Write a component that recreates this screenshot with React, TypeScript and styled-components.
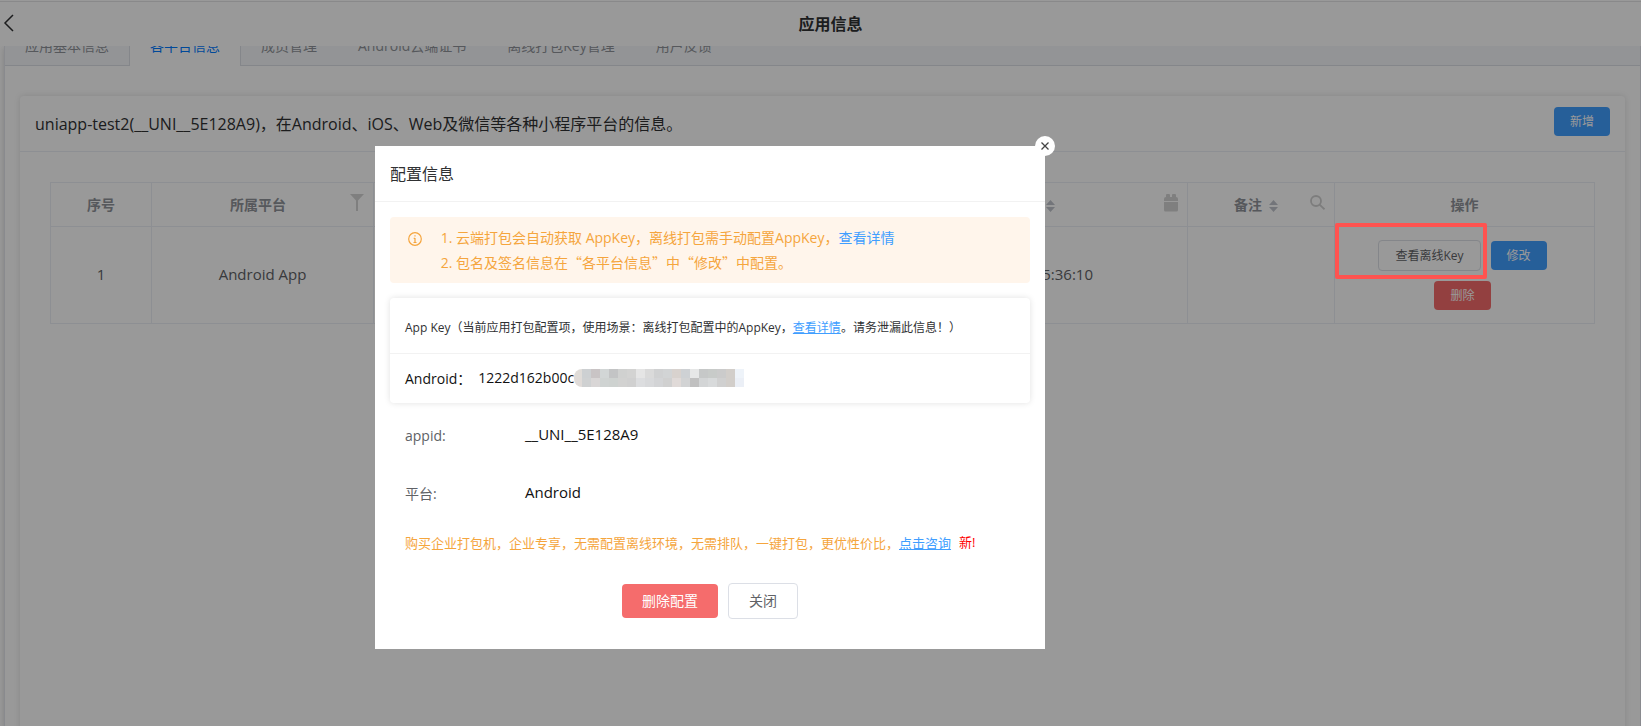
import React from 'react';
import styled, { createGlobalStyle, css } from 'styled-components';

const GlobalStyle = createGlobalStyle`
  * { box-sizing: border-box; }
  body {
    margin: 0;
    background: #fff;
    color: #303133;
    font-family: "Open Sans", "Noto Sans CJK SC", sans-serif;
    font-size: 14px;
    overflow: hidden;
  }
  button { font-family: inherit; cursor: pointer; }
`;

const Page = styled.div`
  height: 100vh;
  display: flex;
  flex-direction: column;
  overflow: hidden;
`;

const TopBar = styled.header`
  flex: none;
  display: flex;
  align-items: center;
  height: 45px;
  margin-top: 1px;
  border-top: 1px solid #e4e4e6;
  background: #fff;
  z-index: 1;
`;

const BackButton = styled.button`
  display: flex;
  width: 20px;
  padding: 0 0 2px 2px;
  border: 0;
  background: none;
  color: #303133;
`;

const PageTitle = styled.h1`
  flex: 1;
  margin: 0;
  text-align: center;
  font-size: 16px;
  line-height: 24px;
  font-weight: 700;
  color: #303133;
`;

const Body = styled.div`
  flex: 1;
  min-height: 0;
  margin-left: 4px;
  border: 1px solid #e4e7ed;
  border-width: 0 1px;
  box-shadow: 0 2px 6px rgba(0, 0, 0, 0.16);
`;

const TabBar = styled.nav`
  display: flex;
  height: 40px;
  margin-top: -20px;
  background: #f5f7fa;
  border-bottom: 1px solid #dcdfe6;
`;

const Tab = styled.button<{ $active?: boolean }>`
  flex: none;
  height: 40px;
  padding: 0 20px;
  border: 0;
  border-right: 1px solid transparent;
  background: none;
  font-size: 14px;
  line-height: 38px;
  color: #909399;
  ${p => p.$active && css`
    border-right-color: #dcdfe6;
    box-shadow: -1px 0 0 #dcdfe6;
    background: #fff;
    color: #007aff;
  `}
`;

const Card = styled.section`
  border-radius: 4px;
  background: #fff;
  box-shadow: 0 0 6px rgba(0, 0, 0, 0.12);
`;

const PlatformCard = styled(Card)`
  margin: 30px 15px 0 15px;
  min-height: 800px;
`;

const CardHead = styled.div`
  display: flex;
  align-items: flex-start;
  justify-content: space-between;
  height: 56px;
  padding: 11px 15px;
  border-bottom: 1px solid #ebeef5;
`;

const CardTitle = styled.h2`
  margin: 0;
  font-size: 16px;
  line-height: 34px;
  font-weight: 400;
`;

type Kind = 'primary' | 'danger' | 'plain';
const Button = styled.button<{ $kind: Kind; $large?: boolean }>`
  padding: ${p => (p.$large ? '0 20px' : '0 16px')};
  height: ${p => (p.$large ? 34 : 29)}px;
  border: 0;
  border-radius: 4px;
  font-size: ${p => (p.$large ? 14 : 12)}px;
  line-height: 20px;
  color: #fff;
  background: ${p => (p.$kind === 'primary' ? '#409eff' : '#f56c6c')};
  ${p => p.$kind === 'plain' && css`
    height: ${p.$large ? 36 : 31}px;
    border: 1px solid #dcdfe6;
    background: #fff;
    color: #606266;
  `}
`;

const Table = styled.table`
  width: calc(100% - 60px);
  margin: 30px;
  table-layout: fixed;
  border-collapse: collapse;
  th, td { border: 1px solid #ebeef5; padding: 0 0 2px; }
`;

const HeadCell = styled.th`
  height: 44px;
  color: #909399;
  font-size: 14px;
`;

const HeadInner = styled.div`
  display: flex;
  align-items: center;
  padding: 0 9px 0 14px;
`;

const HeadLabel = styled.span<{ $end?: boolean }>`
  flex: 1;
  display: flex;
  align-items: center;
  justify-content: ${p => (p.$end ? 'flex-end' : 'center')};
  gap: 7px;
  padding-right: ${p => (p.$end ? 109 : 0)}px;
`;

const SortMark = styled.svg`
  flex: none;
  margin-top: 4px;
`;

const ToolIcon = styled.svg`
  flex: none;
  margin-bottom: 2px;
`;

const Cell = styled.td<{ $end?: boolean }>`
  position: relative;
  height: 97px;
  text-align: ${p => (p.$end ? 'right' : 'center')};
  font-size: 15px;
  color: #606266;
  && { padding-right: ${p => (p.$end ? 94 : 0)}px; }
`;

const Actions = styled.div`
  display: flex;
  flex-wrap: wrap;
  align-items: center;
  justify-content: center;
  gap: 10px;
  padding: 2px 42px 0 38px;
`;

const Highlight = styled.div`
  position: absolute;
  z-index: 20;
  top: -4px;
  left: 0;
  width: 152px;
  height: 56px;
  border: 4px solid #ff5350;
  border-radius: 2px;
  pointer-events: none;
`;

const Overlay = styled.div`
  position: fixed;
  inset: 0;
  z-index: 10;
  display: flex;
  align-items: flex-start;
  justify-content: center;
  padding: 146px 221px 0 0;
  background: rgba(0, 0, 0, 0.4);
`;

const Dialog = styled.div`
  position: relative;
  width: 670px;
  background: #fff;
`;

const CloseButton = styled.button`
  position: absolute;
  top: -10px;
  right: -10px;
  display: flex;
  align-items: center;
  justify-content: center;
  width: 20px;
  height: 20px;
  padding: 0 0 1px;
  border: 0;
  border-radius: 50%;
  background: #fff;
`;

const DialogTitle = styled.h2`
  height: 56px;
  margin: 0;
  padding: 0 15px;
  font-size: 16px;
  line-height: 57px;
  font-weight: 400;
  border-bottom: 1px solid #f2f2f2;
`;

const DialogBody = styled.div`
  padding: 15px 15px 30px;
`;

const Notice = styled.div`
  display: flex;
  padding: 8px 18px;
  border-radius: 4px;
  background: #fff5eb;
  color: #f5a53d;
  svg { margin-top: 7px; }
`;

const NoticeList = styled.ol`
  margin: 0;
  padding-left: 34px;
  line-height: 25px;
`;

const Quoted = styled.span`
  font-family: "Noto Sans CJK SC", sans-serif;
  line-height: 1;
`;

const Link = styled.a<{ $underline?: boolean }>`
  color: #409eff;
  text-decoration: ${p => (p.$underline ? 'underline' : 'none')};
`;

const KeyCard = styled(Card)`
  margin-top: 15px;
`;

const KeyHead = styled.div`
  height: 56px;
  padding: 0 15px;
  font-size: 12px;
  line-height: 60px;
  border-bottom: 1px solid #f2f2f2;
`;

const KeyRow = styled.div`
  display: flex;
  align-items: center;
  height: 49px;
  padding: 0 15px 2px;
  font-size: 14px;
  color: #111;
`;

const KeyLabel = styled.span`
  margin-right: 7px;
`;

const Fields = styled.dl`
  margin: 0;
  padding: 3px 15px 0;
`;

const Field = styled.div`
  display: flex;
  align-items: center;
  height: 58px;
  dt { width: 120px; color: #606266; }
  dd { margin: 0; padding-bottom: 2px; font-size: 15px; color: #111; }
`;

const Promo = styled.p`
  margin: 0;
  padding: 10px 15px;
  font-size: 13px;
  line-height: 22px;
  color: #f5a53d;
`;

const NewMark = styled.span`
  margin-left: 8px;
  font-size: 13px;
  line-height: 1;
  vertical-align: 1px;
  color: #ff0000;
`;

const Footer = styled.div`
  display: flex;
  align-items: center;
  justify-content: center;
  gap: 10px;
  padding-top: 19px;
`;

const SortIcon = () => (
  <SortMark width="9" height="14" viewBox="0 0 9 14" fill="#c0c4cc" aria-hidden="true">
    <path d="M4.5 1 9 6H0zM4.5 13 0 8h9z" />
  </SortMark>
);

const FilterIcon = () => (
  <ToolIcon width="14" height="17" viewBox="0 0 14 17" fill="#d4d4d4" aria-hidden="true">
    <path d="M0 0h14L8 6.500V17H6V6.500z" />
  </ToolIcon>
);

const CalendarIcon = () => (
  <ToolIcon width="14" height="18" viewBox="0 0 14 18" fill="#d4d4d4" aria-hidden="true">
    <path d="M2 1q0-1 1-1h2q1 0 1 1v2h2V1q0-1 1-1h2q1 0 1 1v2q2 0 2 2v2H0V5q0-2 2-2zM0 8h14v8q0 1.500-1.500 1.500h-11Q0 17.500 0 16z" />
  </ToolIcon>
);

const SearchIcon = () => (
  <ToolIcon width="15" height="15" viewBox="0 0 15 15" fill="none" stroke="#d0d0d0" strokeWidth="1.800" aria-hidden="true">
    <circle cx="6" cy="6" r="5" />
    <path d="M9.600 9.600 14.500 14.300" />
  </ToolIcon>
);

const mosaic = [
  '#e0dcd8 #cdd0d2 #c9c4c5 #d2d6d6 #c3c4c5 #d0d1d0 #d3d3d2 #e5e5e5 #dadada #d0d1d2 #d2d4d5 #d8d2ce #ced1d4 #e6e7e7 #c6c8c8 #c8cbc9 #cbcbcb #d2ceca #eef3f9',
  '#e0dbd8 #cfd1d2 #d9d6d6 #cfd3d2 #ced2d0 #d2d2d1 #d0d0d0 #dcdddf #d8d9db #d3d4d6 #d0d0d0 #e0dad8 #d2d3d4 #c0c0c0 #d3d5d6 #d8dadb #d0d0d0 #d2ceca #ebeff6',
].map(row => row.split(' '));

const MaskedKey = () => (
  <svg width="170" height="18" viewBox="0 0 170 18" aria-hidden="true">
    <clipPath id="mask-edge"><rect width="190" height="18" rx="8" /></clipPath>
    <g clipPath="url(#mask-edge)">
      {mosaic.map((row, y) => row.map((fill, x) => (
        <rect key={`${x}-${y}`} x={x ? x * 9 - 1 : 0} y={y * 9} width="9" height="9" fill={fill} />
      )))}
    </g>
  </svg>
);

const tabs = ['应用基本信息', '各平台信息', '成员管理', 'Android云端证书', '离线打包Key管理', '用户反馈'];

export default function App() {
  return (
    <>
      <GlobalStyle />
      <Page>
        <TopBar>
          <BackButton aria-label="返回">
            <svg width="14" height="20" viewBox="0 0 14 20" fill="none" stroke="currentColor" strokeWidth="1.500">
              <path d="M11 2 3 10l8 8" />
            </svg>
          </BackButton>
          <PageTitle>应用信息</PageTitle>
        </TopBar>
        <Body>
          <TabBar>
            {tabs.map((t, i) => <Tab key={t} $active={i === 1}>{t}</Tab>)}
          </TabBar>
          <PlatformCard>
            <CardHead>
              <CardTitle>uniapp-test2(__UNI__5E128A9)，在Android、iOS、Web及微信等各种小程序平台的信息。</CardTitle>
              <Button $kind="primary">新增</Button>
            </CardHead>
            <Table>
              <colgroup>
                <col style={{ width: 101 }} />
                <col style={{ width: 222 }} />
                <col />
                <col style={{ width: 147 }} />
                <col style={{ width: 260 }} />
              </colgroup>
              <thead>
                <tr>
                  <HeadCell>序号</HeadCell>
                  <HeadCell><HeadInner><HeadLabel>所属平台</HeadLabel><FilterIcon /></HeadInner></HeadCell>
                  <HeadCell><HeadInner><HeadLabel $end><SortIcon /></HeadLabel><CalendarIcon /></HeadInner></HeadCell>
                  <HeadCell><HeadInner><HeadLabel>备注<SortIcon /></HeadLabel><SearchIcon /></HeadInner></HeadCell>
                  <HeadCell>操作</HeadCell>
                </tr>
              </thead>
              <tbody>
                <tr>
                  <Cell>1</Cell>
                  <Cell>Android App</Cell>
                  <Cell $end>15:36:10</Cell>
                  <Cell />
                  <Cell>
                    <Actions>
                      <Button $kind="plain">查看离线Key</Button>
                      <Button $kind="primary">修改</Button>
                      <Button $kind="danger">删除</Button>
                    </Actions>
                    <Highlight />
                  </Cell>
                </tr>
              </tbody>
            </Table>
          </PlatformCard>
        </Body>
      </Page>
      <Overlay>
        <Dialog role="dialog" aria-label="配置信息">
          <CloseButton aria-label="关闭">
            <svg width="8" height="8" viewBox="0 0 8 8" stroke="#444" strokeWidth="1.300"><path d="M.5.5l7 7M7.500.5l-7 7" /></svg>
          </CloseButton>
          <DialogTitle>配置信息</DialogTitle>
          <DialogBody>
            <Notice>
              <svg width="14" height="14" viewBox="0 0 14 14" fill="none" stroke="currentColor" aria-hidden="true">
                <circle cx="7" cy="7" r="6.300" strokeWidth="1.200" />
                <path d="M7 3.200v1.400M7 6v4.500M5.700 6.300H7M5.500 10.500h3" strokeWidth="1.200" />
              </svg>
              <NoticeList>
                <li>云端打包会自动获取 AppKey，离线打包需手动配置AppKey，<Link href="#">查看详情</Link></li>
                <li>包名及签名信息在<Quoted lang="zh-CN">“各平台信息”</Quoted>中<Quoted lang="zh-CN">“修改”</Quoted>中配置。</li>
              </NoticeList>
            </Notice>
            <KeyCard>
              <KeyHead>App Key（当前应用打包配置项，使用场景：离线打包配置中的AppKey，<Link href="#" $underline>查看详情</Link>。请务泄漏此信息！）</KeyHead>
              <KeyRow><KeyLabel>Android：</KeyLabel>1222d162b00c<MaskedKey /></KeyRow>
            </KeyCard>
            <Fields>
              <Field><dt>appid:</dt><dd>__UNI__5E128A9</dd></Field>
              <Field><dt>平台:</dt><dd>Android</dd></Field>
            </Fields>
            <Promo>购买企业打包机，企业专享，无需配置离线环境，无需排队，一键打包，更优性价比，<Link href="#" $underline>点击咨询</Link><NewMark>新!</NewMark></Promo>
            <Footer>
              <Button $kind="danger" $large>删除配置</Button>
              <Button $kind="plain" $large>关闭</Button>
            </Footer>
          </DialogBody>
        </Dialog>
      </Overlay>
    </>
  );
}
